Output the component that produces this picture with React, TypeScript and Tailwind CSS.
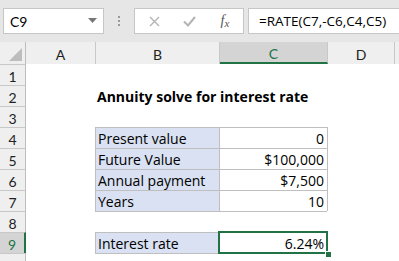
import React from "react";

const hdrBg = "bg-[#EFEFEF]";

function RowHeader({ n, sel }: { n: number; sel?: boolean }) {
  return (
    <div
      className={`w-[26px] shrink-0 h-full flex items-center justify-center border-t border-[#C8C8C8] text-[14px] font-['Lato',sans-serif] ${
        sel
          ? "bg-[#D4D4D4] text-[#217346] border-r-2 border-r-[#217346]"
          : `${hdrBg} text-[#222] border-r border-r-[#BDBDBD]`
      }`}
    >
      <span className="pt-[2px]">{n}</span>
    </div>
  );
}

function Row({
  n,
  sel,
  children,
}: {
  n: number;
  sel?: boolean;
  children?: React.ReactNode;
}) {
  return (
    <div className="flex h-[21px]">
      <RowHeader n={n} sel={sel} />
      {children}
    </div>
  );
}

function TableRow({ n, label, value, sel }: { n: number; label: string; value: string; sel?: boolean }) {
  return (
    <Row n={n} sel={sel}>
      <div className="w-[69px] shrink-0" />
      <div className="w-[124px] shrink-0 border-t border-l border-[#BFBFBF] bg-[#D9E1F2] text-[14px] text-black flex items-end pl-[2px] pb-[0px] leading-[19px] whitespace-nowrap">
        {label}
      </div>
      <div className="w-[108px] shrink-0 border-t border-l border-[#BFBFBF] bg-white text-[14px] text-black flex items-end justify-end pr-[3px] pb-[0px] leading-[19px]">
        {value}
      </div>
      <div className="w-[67px] shrink-0 border-l border-[#BFBFBF]" />
    </Row>
  );
}

function CloseRow({ n }: { n: number }) {
  return (
    <Row n={n}>
      <div className="w-[69px] shrink-0" />
      <div className="w-[124px] shrink-0 border-t border-[#BFBFBF]" />
      <div className="w-[108px] shrink-0 border-t border-[#BFBFBF]" />
    </Row>
  );
}

export default function App() {
  return (
    <div className="w-[399px] h-[261px] overflow-hidden bg-white relative font-['Open_Sans',sans-serif] text-black">
      {/* formula bar */}
      <div className="h-[42px] bg-[#E6E6E6] flex items-start pt-[8px]">
        <div className="ml-[3px] w-[101px] h-[26px] bg-white border border-[#C6C6C6] flex items-center pl-[6px] pr-[6px] text-[14px] font-['Lato',sans-serif]">
          <span className="flex-1 pt-[1px]">C9</span>
          <svg width="9" height="6" viewBox="0 0 9 6">
            <path d="M0 0 L9 0 L4.5 5 Z" fill="#777" />
          </svg>
        </div>
        <div className="w-[30px] h-[26px] flex flex-col items-center justify-center gap-[2px]">
          <div className="w-[2px] h-[2px] bg-[#9A9A9A]" />
          <div className="w-[2px] h-[2px] bg-[#9A9A9A]" />
          <div className="w-[2px] h-[2px] bg-[#9A9A9A]" />
        </div>
        <div className="w-[110px] h-[26px] bg-white border border-[#C6C6C6] flex items-center">
          <div className="w-[36px] flex justify-center pl-[2px]">
            <svg width="11" height="11" viewBox="0 0 11 11">
              <path d="M1 1 L10 10 M10 1 L1 10" stroke="#B4B4B4" strokeWidth="1.4" />
            </svg>
          </div>
          <div className="w-[36px] flex justify-center">
            <svg width="13" height="11" viewBox="0 0 13 11">
              <path d="M1 5.5 L5 9.5 L12 1" stroke="#B4B4B4" strokeWidth="2" fill="none" />
            </svg>
          </div>
          <div className="w-[36px] flex justify-center text-[#555] font-['Liberation_Serif',serif] italic text-[14px] leading-none">
            <span>f</span>
            <span className="text-[11px] mt-[4px]">x</span>
          </div>
        </div>
        <div className="ml-[4px] flex-1 h-[26px] bg-white border border-[#C6C6C6] border-r-0 flex items-center pl-[10px] text-[13.5px] whitespace-nowrap">
          <span className="pt-[1px]">=RATE(C7,-C6,C4,C5)</span>
        </div>
      </div>

      {/* column headers */}
      <div className={`flex h-[22px] ${hdrBg} text-[14px] text-[#222] font-['Lato',sans-serif]`}>
        <div className="w-[26px] shrink-0 border-r border-[#BDBDBD] relative">
          <svg className="absolute left-[9px] top-[6px]" width="13" height="13" viewBox="0 0 13 13">
            <path d="M13 0 L13 13 L0 13 Z" fill="#BDBDBD" />
          </svg>
        </div>
        <div className="w-[70px] shrink-0 border-r border-[#C8C8C8] flex items-center justify-center pt-[3px]">A</div>
        <div className="w-[124px] shrink-0 border-r border-[#C8C8C8] flex items-center justify-center pt-[3px]">B</div>
        <div className="w-[108px] shrink-0 border-r border-[#C8C8C8] bg-[#D4D4D4] border-b-2 border-b-[#217346] text-[#217346] flex items-center justify-center pt-[3px]">C</div>
        <div className="w-[67px] shrink-0 border-r border-[#C8C8C8] flex items-center justify-center pt-[3px]">D</div>
        <div className="flex-1" />
      </div>

      <Row n={1} />
      <Row n={2}>
        <div className="w-[69px] shrink-0" />
        <div className="pl-[2px] font-bold text-[14px] leading-[19px] flex items-end whitespace-nowrap">
          Annuity solve for interest rate
        </div>
      </Row>
      <Row n={3} />
      <TableRow n={4} label="Present value" value="0" />
      <TableRow n={5} label="Future Value" value="$100,000" />
      <TableRow n={6} label="Annual payment" value="$7,500" />
      <TableRow n={7} label="Years" value="10" />
      <CloseRow n={8} />
      <div className="relative">
        <TableRow n={9} label="Interest rate" value="6.24%" sel />
        <div className="absolute left-[218px] top-[-1px] w-[110px] h-[23px] border-2 border-[#217346] pointer-events-none" />
        <div className="absolute left-[325px] top-[19px] w-[5px] h-[5px] bg-[#217346] border border-white box-content" />
      </div>
      <CloseRow n={10} />
    </div>
  );
}
